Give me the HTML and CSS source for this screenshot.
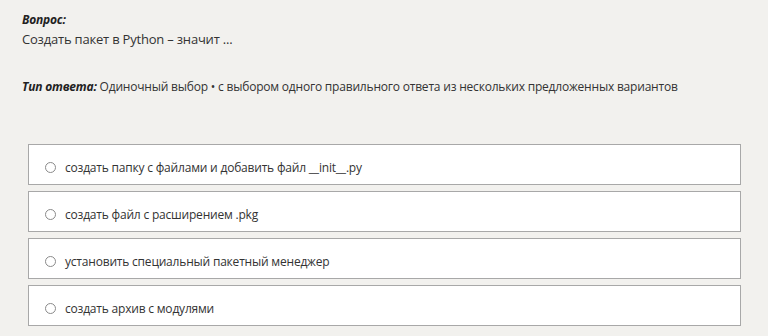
FILE: index.html
```html
<!DOCTYPE html>
<html lang="ru">
<head>
    <meta charset="UTF-8">
    <title>Вопрос</title>
    <link rel="stylesheet" href="styles.css">
</head>
<body>
    <div class="question">
        <div class="label">Вопрос:</div>
        <div class="question-text">Создать пакет в Python – значит ...</div>
    </div>

    <div class="answer-type">
        <span class="label">Тип ответа:</span> Одиночный выбор • с выбором одного правильного ответа из нескольких предложенных вариантов
    </div>

    <div class="options">
        <label class="option"><span class="radio"></span>создать папку с файлами и добавить файл __init__.py</label>
        <label class="option"><span class="radio"></span>создать файл с расширением .pkg</label>
        <label class="option"><span class="radio"></span>установить специальный пакетный менеджер</label>
        <label class="option"><span class="radio"></span>создать архив с модулями</label>
    </div>
</body>
</html>
```

FILE: styles.css
```css
html,
body {
    margin: 0;
    padding: 0;
}

body {
    font: 12px 'Open Sans', 'Noto Sans', sans-serif;
    letter-spacing: -0.2px;
    background: #f2f1ee;
    color: #333333;
    padding: 10px 27px 0 22px;
}

.label {
    font-weight: 700;
    font-style: italic;
    color: #222222;
}

.question {
    line-height: 19px;
}

.question-text {
    font-size: 13px;
    line-height: 21px;
}

.answer-type {
    margin-top: 27px;
    line-height: 19px;
}

.options {
    margin-top: 48px;
    margin-left: 6px;
    display: flex;
    flex-direction: column;
    gap: 6px;
}

.option {
    display: flex;
    align-items: center;
    height: 33px;
    padding: 6px 0 0 16px;
    background: #ffffff;
    border: 1px solid #a8a8a8;
}

.radio {
    width: 9px;
    height: 9px;
    border: 1px solid #8a8a8a;
    border-radius: 50%;
    margin-right: 9px;
    background: #ffffff;
}
```
